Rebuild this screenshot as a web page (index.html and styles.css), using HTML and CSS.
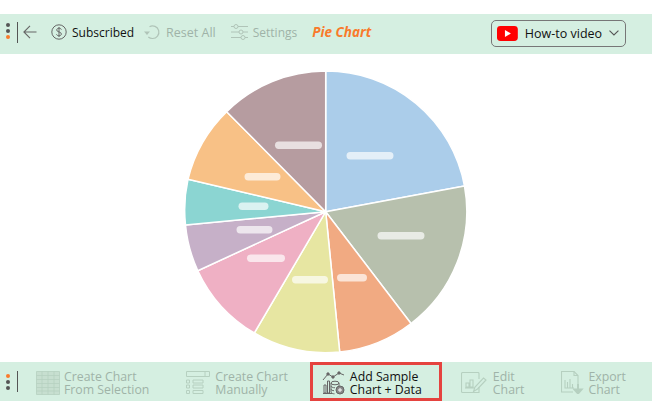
FILE: index.html
```html
<!DOCTYPE html>
<html lang="en">
<head>
    <meta charset="UTF-8">
    <meta name="viewport" content="width=device-width, initial-scale=1.0">
    <title>Pie Chart</title>
    <link rel="stylesheet" href="styles.css">
</head>
<body>
    <div class="page">
        <div class="topbar">
            <div class="dots"><i></i><i></i><i class="hot"></i></div>
            <div class="divider"></div>
            <svg class="ico-back" width="14" height="14" viewBox="0 0 14 14" fill="none" stroke="#666" stroke-width="1.1"><path d="M13.500 7H1M7 .8 .9 7 7 13.200"/></svg>
            <div class="tool tool-sub">
                <svg width="16" height="16" viewBox="0 0 16 16" fill="none" stroke="#666" stroke-width="1"><circle cx="8" cy="8" r="7.200"/><path d="M10.400 5.600C10 4.600 9 4.200 8 4.200 6.700 4.200 5.700 5 5.700 6 5.700 8.400 10.400 7.500 10.400 10 10.400 11 9.300 11.800 8 11.800 6.800 11.800 5.900 11.300 5.500 10.300M8 3v10"/></svg>
                <span>Subscribed</span>
            </div>
            <div class="tool tool-off tool-reset">
                <svg width="17" height="16" viewBox="0 0 17 16" fill="none" stroke="#b0c4b8" stroke-width="1.200"><path d="M5.500 2.700A6.300 6.300 0 1 1 8.500 14.500 6.300 6.300 0 0 1 4.300 13"/><path d="M0 7.500h6L3 11z" fill="#b0c4b8" stroke="none"/></svg>
                <span>Reset All</span>
            </div>
            <div class="tool tool-off tool-settings">
                <svg width="17" height="16" viewBox="0 0 17 16" fill="none" stroke="#b0c4b8" stroke-width="1"><path d="M0 2.500h3M7 2.500h10M0 8h8M12 8h5M0 13.500h10M14 13.500h3"/><circle cx="5" cy="2.500" r="2"/><circle cx="10" cy="8" r="2"/><circle cx="12" cy="13.500" r="2"/></svg>
                <span>Settings</span>
            </div>
            <div class="chart-title">Pie Chart</div>
            <div class="video-btn">
                <svg width="21" height="15" viewBox="0 0 21 15"><rect width="21" height="15" rx="3.500" fill="#f00"/><path d="M8 4v7l6-3.500z" fill="#fff"/></svg>
                <span>How-to video</span>
                <svg class="chev" width="10" height="6" viewBox="0 0 10 6" fill="none" stroke="#555" stroke-width="1.100"><path d="M.5.500 5 5 9.500.500"/></svg>
            </div>
        </div>

        <div class="chart-area">
            <svg class="pie" width="284" height="284" viewBox="184 70 284 284">
                <g stroke="#fff" stroke-width="1.500" stroke-linejoin="round">
                    <path fill="#abcdea" d="M325.700 211.700V71A140.700 140.700 0 0 1 464.500 186Z"/>
                    <path fill="#b7c0ad" d="M325.700 211.700 464.500 186A140.700 140.700 0 0 1 411 323.500Z"/>
                    <path fill="#f1aa82" d="M325.700 211.700 411 323.500A140.700 140.700 0 0 1 339.700 352Z"/>
                    <path fill="#e7e6a2" d="M325.700 211.700 339.700 352A140.700 140.700 0 0 1 254.300 333Z"/>
                    <path fill="#efb0c4" d="M325.700 211.700 254.300 333A140.700 140.700 0 0 1 197.800 270.700Z"/>
                    <path fill="#c6b0c8" d="M325.700 211.700 197.800 270.700A140.700 140.700 0 0 1 185.500 225Z"/>
                    <path fill="#8bd5d2" d="M325.700 211.700 185.500 225A140.700 140.700 0 0 1 188 179.300Z"/>
                    <path fill="#f8c186" d="M325.700 211.700 188 179.300A140.700 140.700 0 0 1 226.700 111.700Z"/>
                    <path fill="#b69ca0" d="M325.700 211.700 226.700 111.700A140.700 140.700 0 0 1 325.700 71Z"/>
                </g>
                <g fill="#fff" fill-opacity=".68">
                    <rect x="346.500" y="152" width="47" height="7.500" rx="3.700"/>
                    <rect x="377.500" y="232" width="47" height="7.500" rx="3.700"/>
                    <rect x="337" y="274" width="30" height="7.500" rx="3.700"/>
                    <rect x="292" y="276" width="36" height="7.500" rx="3.700"/>
                    <rect x="247" y="254.500" width="38" height="7.500" rx="3.700"/>
                    <rect x="236.500" y="226" width="36" height="7.500" rx="3.700"/>
                    <rect x="238.500" y="202.500" width="30" height="7.500" rx="3.700"/>
                    <rect x="244.500" y="173" width="36" height="7.500" rx="3.700"/>
                    <rect x="275" y="141.500" width="47" height="7.500" rx="3.700"/>
                </g>
            </svg>
        </div>

        <div class="bottombar">
            <div class="dots"><i class="hot"></i><i></i><i></i></div>
            <div class="divider"></div>
            <div class="action action-off action-selection">
                <svg width="24" height="24" viewBox="0 0 24 24" fill="#c7dfd0" stroke="#b6d0c0" stroke-width=".8"><path d="M.5.500h23v23H.5z"/><path fill="none" d="M.5 4.500h23M.5 8.500h23M.5 12.500h23M.5 16.500h23M.5 20h23M6 .500v23M12 .500v23M18 .500v23"/></svg>
                <span>Create Chart<br>From Selection</span>
            </div>
            <div class="action action-off action-manual">
                <svg width="24" height="24" viewBox="0 0 24 24" fill="none" stroke="#b6d0c0" stroke-width="1"><path d="M.5.500h23v5H.5zM19 .500v5M.5 9h3v3h-3zM.5 14h3v3h-3zM.5 19.500h3v3h-3zM7 9h10v3H7zM7 14h10v3H7zM7 19.500h10v3H7z"/></svg>
                <span>Create Chart<br>Manually</span>
            </div>
            <div class="action action-sample">
                <svg width="23" height="24" viewBox="0 0 23 24" fill="none" stroke="#666" stroke-width="1"><path d="M1 9 6 3l5 3 6-4 5 2"/><circle cx="6" cy="3" r="1.200" fill="#666"/><circle cx="11" cy="6" r="1.200" fill="#666"/><circle cx="17" cy="2" r="1.200" fill="#666"/><path d="M1 22.500h9M2 14h2v8H2zM5.500 10h2v12h-2z"/><ellipse cx="13" cy="12" rx="4" ry="1.800"/><path d="M9 12v9c0 1.200 2 1.800 3.500 1.800M17 12v3M9 15c0 1 2 1.800 4 1.800M9 18c0 1 1.500 1.700 3 1.700"/><circle cx="18" cy="19" r="4" fill="#888"/><path d="M16 19h4M18 17v4" stroke="#fff"/></svg>
                <span>Add Sample<br>Chart + Data</span>
            </div>
            <div class="action action-off action-edit">
                <svg width="26" height="22" viewBox="0 0 26 22" fill="none" stroke="#b6d0c0" stroke-width="1.100"><path d="M18 15v5.500H1.500a1 1 0 0 1-1-1V1.500a1 1 0 0 1 1-1H17a1 1 0 0 1 1 1V7"/><path d="M5 15v-4h3v4zM9 15V8h3v7zM4 16h10"/><path d="m25 8-8.500 9-4 2.500 1.500-4.500 8.500-9z"/></svg>
                <span>Edit<br>Chart</span>
            </div>
            <div class="action action-off action-export">
                <svg width="23" height="23" viewBox="0 0 23 23" fill="none" stroke="#b6d0c0" stroke-width="1.100"><path d="M17 13V4.500L13 .500H.500v20.500H12"/><path d="M13 .500v4h4M4 9v8h9M6.500 17v-6M9 17V8M11.500 17v-4"/><path d="M17 13v6M13.500 18.500l3.500 4 3.500-4z" stroke-width="2" fill="#b6d0c0"/></svg>
                <span>Export<br>Chart</span>
            </div>
        </div>
    </div>
</body>
</html>
```

FILE: styles.css
```css
body {
    margin: 0;
    font-family: 'Open Sans', 'Noto Sans', sans-serif;
    background: #fff;
    color: #111;
}
.page {
    height: 415px;
    padding-top: 14px;
    box-sizing: border-box;
    overflow: hidden;
}
.topbar {
    height: 40px;
    box-sizing: border-box;
    padding-bottom: 4px;
    display: flex;
    align-items: center;
    background: #d5efe1;
    font-size: 12px;
    white-space: nowrap;
}
.dots {
    width: 4px;
    margin-left: 6px;
    display: flex;
    flex-direction: column;
    gap: 2px;
}
.topbar .dots {
    margin-bottom: 2px;
}
.dots i {
    display: block;
    width: 4px;
    height: 4px;
    border-radius: 50%;
    background: #555;
}
.dots .hot {
    background: #f97a2b;
}
.divider {
    width: 1px;
    height: 21px;
    margin-left: 7px;
    background: #555;
}
.ico-back {
    margin-left: 5px;
}
.tool {
    display: flex;
    align-items: center;
    gap: 5px;
}
.tool-sub {
    margin-left: 14px;
}
.tool-reset {
    margin-left: 10px;
    font-size: 12.5px;
}
.tool-settings {
    margin-left: 15px;
}
.tool-off {
    color: #9fb3a8;
}
.chart-title {
    margin-left: 15px;
    color: #f97a2b;
    font-size: 13.500px;
    font-weight: 700;
    font-style: italic;
}
.video-btn {
    margin: 2px 26px 0 auto;
    width: 135px;
    height: 27px;
    box-sizing: border-box;
    padding: 0 6px 0 5px;
    display: flex;
    align-items: center;
    gap: 7px;
    border: 1px solid #777;
    border-radius: 5px;
    font-size: 12.500px;
}
.chev {
    margin-left: auto;
}
.chart-area {
    height: 308px;
    display: flex;
    justify-content: center;
}
.pie {
    margin: 16px 0 0 0;
}
.bottombar {
    height: 39px;
    display: flex;
    align-items: center;
    background: #d5efe1;
    font-size: 12.300px;
    line-height: 13px;
}
.action {
    height: 100%;
    box-sizing: border-box;
    display: flex;
    align-items: center;
    gap: 4px;
}
.action > * {
    margin-top: 2px;
}
.action-off {
    color: #9fb3a8;
}
.action-selection {
    margin-left: 18px;
}
.action-manual {
    margin-left: 37px;
    gap: 5px;
}
.action-sample {
    margin-left: 22px;
    width: 132px;
    padding-left: 9px;
    gap: 5px;
    border: 3px solid #e5433f;
}
.action-edit {
    margin-left: 19px;
    gap: 6px;
}
.action-export {
    margin-left: 37px;
    gap: 4px;
}
```
